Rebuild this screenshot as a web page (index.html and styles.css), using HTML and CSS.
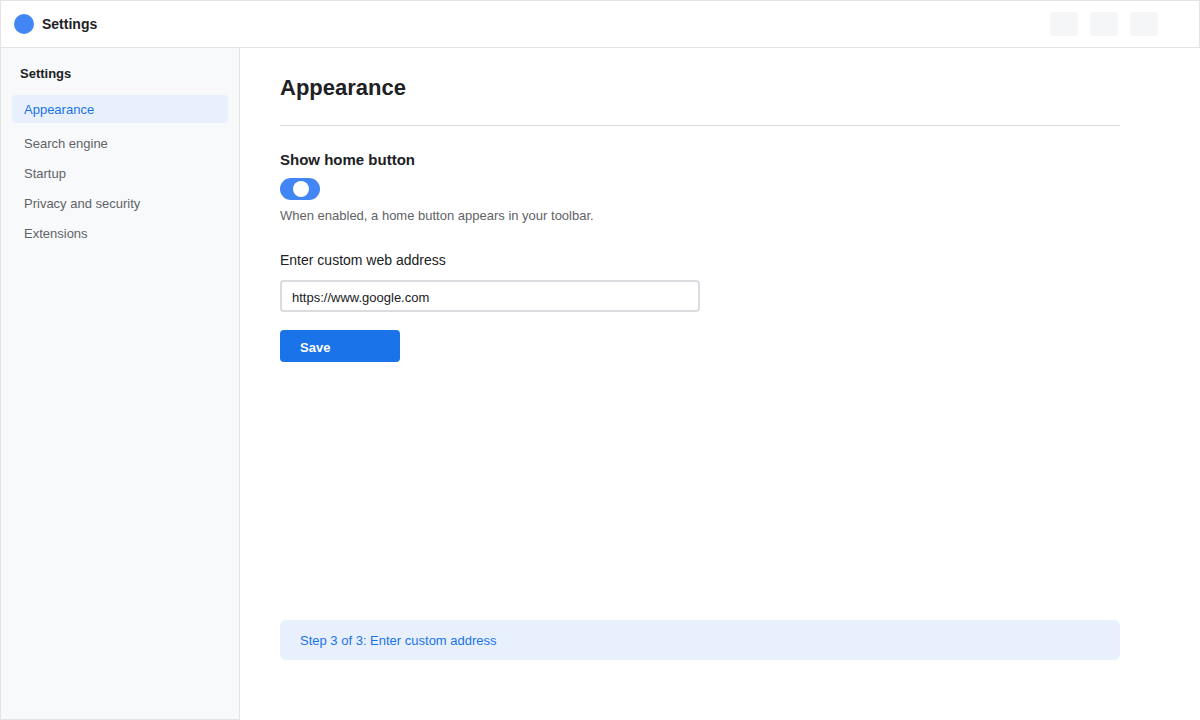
FILE: index.html
```html
<!DOCTYPE html>
<html lang="en">
<head>
  <meta charset="UTF-8">
  <meta name="viewport" content="width=device-width, initial-scale=1.0">
  <title>Settings</title>
  <link rel="stylesheet" href="styles.css">
</head>
<body>
  <div class="topbar">
    <div class="brand">
      <div class="brand-dot"></div>
      <div class="brand-name">Settings</div>
    </div>
    <div class="top-actions">
      <div class="top-btn"></div>
      <div class="top-btn"></div>
      <div class="top-btn"></div>
    </div>
  </div>

  <div class="layout">
    <div class="sidebar">
      <div class="side-title">Settings</div>
      <div class="nav-item active">Appearance</div>
      <div class="nav-item">Search engine</div>
      <div class="nav-item">Startup</div>
      <div class="nav-item">Privacy and security</div>
      <div class="nav-item">Extensions</div>
    </div>

    <div class="main">
      <div class="page-title">Appearance</div>
      <div class="divider"></div>

      <div class="setting-title">Show home button</div>
      <div class="toggle"><div class="knob"></div></div>
      <div class="help">When enabled, a home button appears in your toolbar.</div>

      <div class="field-label">Enter custom web address</div>
      <input class="field" type="text" value="https://www.google.com">
      <button class="save-btn">Save</button>

      <div class="step">Step 3 of 3: Enter custom address</div>
    </div>
  </div>
</body>
</html>
```

FILE: styles.css
```css
* {
  box-sizing: border-box;
}
body {
  margin: 0;
  padding: 0;
  font-family: "Liberation Sans", Arial, sans-serif;
  color: #202124;
  background: #ffffff;
}
.topbar {
  height: 48px;
  border: 1px solid #e3e3e3;
  display: flex;
  align-items: center;
  justify-content: space-between;
  padding: 0 41px 0 13px;
}
.brand {
  display: flex;
  align-items: center;
}
.brand-dot {
  width: 20px;
  height: 20px;
  border-radius: 50%;
  background-color: #4285f4;
  margin-right: 8px;
}
.brand-name {
  font-size: 14px;
  font-weight: bold;
}
.top-actions {
  display: flex;
  gap: 12px;
}
.top-btn {
  width: 28px;
  height: 24px;
  border-radius: 4px;
  background-color: #f5f6f8;
}
.layout {
  display: flex;
  height: 672px;
}
.sidebar {
  width: 240px;
  flex-shrink: 0;
  background-color: #f8f9fb;
  border: 1px solid #e3e3e3;
  border-top: none;
  padding: 18px 11px;
}
.side-title {
  font-size: 13px;
  font-weight: bold;
  line-height: 16px;
  padding-left: 8px;
  margin-bottom: 13px;
}
.nav-item {
  font-size: 13px;
  line-height: 16px;
  padding: 8px 12px 6px;
  color: #5f6368;
}
.nav-item.active {
  padding: 7px 12px 5px;
  margin-bottom: 5px;
  background-color: #e8f0fe;
  color: #1a73e8;
  border-radius: 4px;
}
.main {
  flex: 1;
  display: flex;
  flex-direction: column;
  align-items: flex-start;
  padding: 26px 80px 60px 40px;
}
.page-title {
  font-size: 22px;
  font-weight: bold;
  line-height: 28px;
  margin-bottom: 23px;
}
.divider {
  width: 840px;
  height: 1px;
  background-color: #dadce0;
  margin-bottom: 24px;
}
.setting-title {
  font-size: 15px;
  font-weight: bold;
  line-height: 20px;
  margin-bottom: 8px;
}
.toggle {
  width: 40px;
  height: 22px;
  border-radius: 11px;
  background-color: #4285f4;
  position: relative;
  margin-bottom: 8px;
}
.knob {
  position: absolute;
  top: 3px;
  left: 13px;
  width: 16px;
  height: 16px;
  border-radius: 50%;
  background-color: #ffffff;
}
.help {
  font-size: 13px;
  line-height: 16px;
  color: #5f6368;
  margin-bottom: 27px;
}
.field-label {
  font-size: 14px;
  line-height: 18px;
  margin-bottom: 11px;
}
.field {
  width: 420px;
  height: 32px;
  border: 2px solid #dadce0;
  border-radius: 4px;
  padding: 2px 10px 0;
  font-family: "Liberation Sans", Arial, sans-serif;
  font-size: 13px;
  color: #202124;
  margin-bottom: 18px;
}
.save-btn {
  width: 120px;
  height: 32px;
  border: none;
  border-radius: 4px;
  background-color: #1a73e8;
  color: #ffffff;
  font-family: "Liberation Sans", Arial, sans-serif;
  font-size: 13px;
  font-weight: bold;
  text-align: left;
  padding: 3px 20px 0;
}
.step {
  margin-top: auto;
  width: 840px;
  height: 40px;
  display: flex;
  align-items: center;
  padding: 1px 20px 0;
  background-color: #e8f0fe;
  border-radius: 6px;
  font-size: 13px;
  color: #1a73e8;
}
```
